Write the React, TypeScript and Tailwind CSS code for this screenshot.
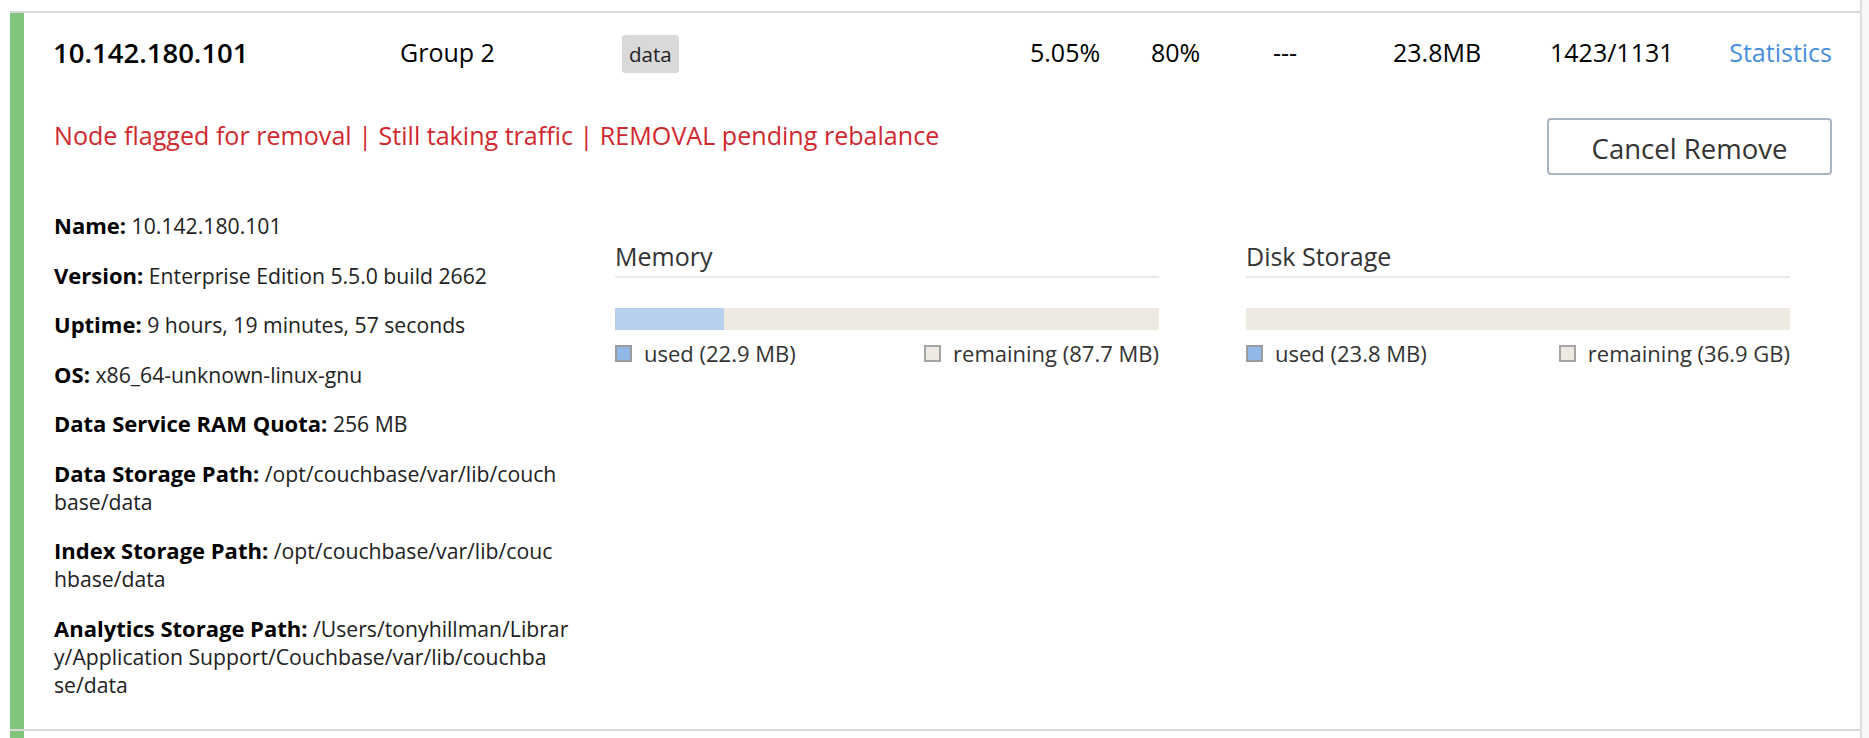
import React from 'react';

interface DetailItem {
	label: string;
	lines: string[];
}

// paths wrap mid-word in the original layout, keep the same breaks
const details: DetailItem[] = [
	{ label: 'Name:', lines: ['10.142.180.101'] },
	{ label: 'Version:', lines: ['Enterprise Edition 5.5.0 build 2662'] },
	{ label: 'Uptime:', lines: ['9 hours, 19 minutes, 57 seconds'] },
	{ label: 'OS:', lines: ['x86_64-unknown-linux-gnu'] },
	{ label: 'Data Service RAM Quota:', lines: ['256 MB'] },
	{ label: 'Data Storage Path:', lines: ['/opt/couchbase/var/lib/couch', 'base/data'] },
	{ label: 'Index Storage Path:', lines: ['/opt/couchbase/var/lib/couc', 'hbase/data'] },
	{ label: 'Analytics Storage Path:', lines: ['/Users/tonyhillman/Librar', 'y/Application Support/Couchbase/var/lib/couchba', 'se/data'] },
];

interface UsageProps {
	title: string;
	usedPct: number;
	used: string;
	remaining: string;
}

const UsageChart: React.FC<UsageProps> = ({ title, usedPct, used, remaining }) => (
	<div className="w-[544px]">
		<div className="text-[25px] leading-[32px] font-medium text-[#333] pb-[4px] border-b-2 border-[#e9e9e9]">{title}</div>
		<div className="mt-[30px] h-[22px] bg-[#eeeae1] flex">
			{usedPct > 0 && <div className="h-full bg-[#b6d0ee]" style={{ width: `${usedPct}%` }} />}
		</div>
		<div className="mt-[11px] h-[24px] flex items-center justify-between text-[22px] text-[#333]">
			<div className="flex items-center gap-[12px]">
				<span className="w-[17px] h-[17px] border-2 border-[#9b9b9b] bg-[#8fb8e6]" />
				<span>used ({used})</span>
			</div>
			<div className="flex items-center gap-[12px]">
				<span className="w-[17px] h-[17px] border-2 border-[#a5a5a5] bg-[#eeeae1]" />
				<span>remaining ({remaining})</span>
			</div>
		</div>
	</div>
);

const ServerRow: React.FC = () => (
	<div className="border-t-2 border-[#d8d8d8] flex">
		<div className="w-[14px] bg-[#80c57b] shrink-0" />
		<div className="flex-1 pl-[30px] pr-[28px] pb-[30px]">
			{/* summary line */}
			<div className="h-[80px] flex items-center text-[25px] text-black">
				<div className="w-[346px] -ml-[1px] text-[27.5px] font-semibold">10.142.180.101</div>
				<div className="w-[222px] ml-[1px]">Group 2</div>
				<div className="w-[408px]">
					<span className="inline-block bg-[#d9d9d9] rounded-[3px] px-[7px] h-[38px] leading-[38px] text-[20.5px] text-[#222]">data</span>
				</div>
				<div className="w-[121px]">5.05%</div>
				<div className="w-[122px]">80%</div>
				<div className="w-[120px]">---</div>
				<div className="w-[157px]">23.8MB</div>
				<div className="w-[179px]">1423/1131</div>
				<a href="#" className="flex-1 text-right text-[#4a8fdc]">Statistics</a>
			</div>

			{/* status + action */}
			<div className="pt-[24px] flex justify-between items-start">
				<div className="text-[25.1px] leading-[36px] text-[#d0282f]">
					Node flagged for removal | Still taking traffic | REMOVAL pending rebalance
				</div>
				<button className="mt-[1px] w-[285px] h-[57px] pt-[4px] border-2 border-[#a9b5c1] rounded-[4px] bg-white text-[27.5px] text-[#333]">
					Cancel Remove
				</button>
			</div>

			{/* details + charts */}
			<div className="pt-[37px] flex">
				<div className="w-[505px] text-[21.2px] leading-[28px] text-[#222] whitespace-nowrap">
					{details.map((d) => (
						<div key={d.label} className="mb-[21.5px] last:mb-0">
							<span className="font-bold text-[22px] leading-[20px] text-black">{d.label}</span>{' '}
							{d.lines.map((line, i) => (
								<React.Fragment key={i}>
									{i > 0 && <br />}
									{line}
								</React.Fragment>
							))}
						</div>
					))}
				</div>
				<div className="ml-[56px] pt-[28px] flex gap-[87px]">
					<UsageChart title="Memory" usedPct={20} used="22.9 MB" remaining="87.7 MB" />
					<UsageChart title="Disk Storage" usedPct={0} used="23.8 MB" remaining="36.9 GB" />
				</div>
			</div>
		</div>
	</div>
);

const App: React.FC = () => {
	return (
		<div className="h-[738px] overflow-hidden flex bg-white font-['Open_Sans',sans-serif]">
			<div className="flex-1 pl-[10px] pt-[11px]">
				<ServerRow />
				<div className="border-t-2 border-[#d8d8d8] flex h-[60px]">
					<div className="w-[14px] bg-[#80c57b]" />
				</div>
			</div>
			<div className="w-[9px] border-l-2 border-[#dedede] bg-[#f7f7f7]" />
		</div>
	);
};

export default App;
